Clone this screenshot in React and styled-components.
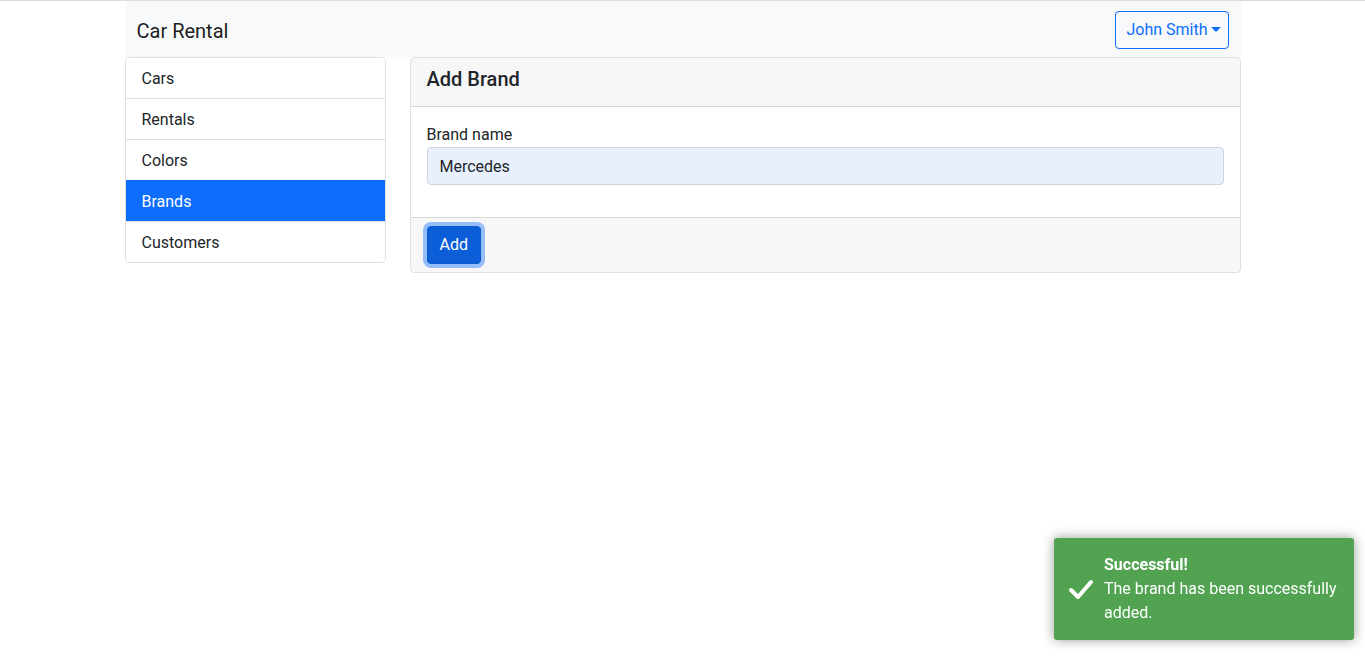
import React from 'react';
import styled, { createGlobalStyle } from 'styled-components';

const GlobalStyle = createGlobalStyle`
  *, *::before, *::after { box-sizing: border-box; }
  body {
    margin: 0;
    font-family: Roboto, "Noto Sans", "Liberation Sans", sans-serif;
    font-size: 16px;
    line-height: 1.5;
    color: #212529;
    background: #fff;
  }
`;

const Page = styled.div`
  border-top: 1px solid #dcdcdc;
  min-height: 656px;
`;

const Container = styled.div`
  max-width: 1140px;
  margin: 0 auto;
  padding: 0 12px;
`;

const Navbar = styled.nav`
  display: flex;
  align-items: center;
  justify-content: space-between;
  height: 56px;
  padding: 8px 12px;
  background: #f8f9fa;
`;

const Brand = styled.span`
  font-size: 20px;
  line-height: 30px;
  padding-top: 3px;
  color: rgba(0, 0, 0, 0.9);
`;

const UserButton = styled.button`
  display: flex;
  align-items: center;
  height: 38px;
  margin-top: 1px;
  padding: 6px 7px 6px 10px;
  font: inherit;
  color: #0d6efd;
  background: transparent;
  border: 1px solid #0d6efd;
  border-radius: 4px;

  &::after {
    content: '';
    margin-left: 3px;
    border-top: 5px solid currentColor;
    border-left: 5px solid transparent;
    border-right: 5px solid transparent;
  }
`;

const Row = styled.div`
  display: grid;
  grid-template-columns: 261px 1fr;
  gap: 24px;
`;

const ListGroup = styled.div`
  display: flex;
  flex-direction: column;
  align-self: start;
  border: 1px solid rgba(0, 0, 0, 0.125);
  border-radius: 4px;
  overflow: hidden;
`;

const ListItem = styled.div`
  padding: 9px 16px 7px;
  height: ${({ first }) => (first ? '40px' : '41px')};
  color: ${({ active }) => (active ? '#fff' : '#212529')};
  background: ${({ active }) => (active ? '#0d6efd' : '#fff')};
  border-top: ${({ first }) => (first ? 'none' : '1px solid rgba(0,0,0,0.125)')};
  border-color: ${({ active }) => (active ? '#0d6efd' : 'rgba(0,0,0,0.125)')};
  line-height: 24px;
`;

const Card = styled.div`
  align-self: start;
  border: 1px solid rgba(0, 0, 0, 0.125);
  border-radius: 4px;
  overflow: hidden;
`;

const CardHeader = styled.div`
  padding: 9px 16px 15px;
  background: rgba(0, 0, 0, 0.03);
  border-bottom: 1px solid rgba(0, 0, 0, 0.125);
`;

const CardTitle = styled.h5`
  margin: 0;
  font-size: 20px;
  font-weight: 500;
  line-height: 24px;
`;

const CardBody = styled.div`
  padding: 16px;
`;

const Field = styled.div`
  margin-bottom: 16px;
`;

const Label = styled.label`
  display: block;
  margin: 0;
  line-height: 24px;
`;

const Input = styled.input`
  display: block;
  width: 100%;
  height: 38px;
  padding: 6px 12px;
  font: inherit;
  color: #212529;
  background: #e8f0fe;
  border: 1px solid #ced4da;
  border-radius: 4px;
  outline: none;
`;

const CardFooter = styled.div`
  padding: 8px 16px;
  background: rgba(0, 0, 0, 0.03);
  border-top: 1px solid rgba(0, 0, 0, 0.125);
`;

const PrimaryButton = styled.button`
  display: block;
  height: 38px;
  padding: 6px 12px;
  font: inherit;
  color: #fff;
  background: #0b5ed7;
  border: 1px solid #0a58ca;
  border-radius: 4px;
  box-shadow: 0 0 0 4px rgba(49, 132, 253, 0.5);
`;

const Toast = styled.div`
  position: fixed;
  right: 11px;
  bottom: 17px;
  width: 300px;
  display: flex;
  align-items: center;
  padding: 15px 15px 15px 50px;
  background: #51a351;
  color: #fff;
  border-radius: 3px;
  box-shadow: 0 0 12px #999;
`;

const ToastIcon = styled.svg`
  position: absolute;
  left: 14px;
  top: 50%;
  transform: translateY(-50%);
`;

const ToastText = styled.div`
  line-height: 24px;
`;

const ToastTitle = styled.div`
  font-weight: 700;
`;

const menu = ['Cars', 'Rentals', 'Colors', 'Brands', 'Customers'];

export default function App() {
  return (
    <>
      <GlobalStyle />
      <Page>
        <Container>
          <Navbar>
            <Brand>Car Rental</Brand>
            <UserButton>John Smith</UserButton>
          </Navbar>
          <Row>
            <ListGroup>
              {menu.map((m, i) => (
                <ListItem key={m} first={i === 0} active={m === 'Brands'}>
                  {m}
                </ListItem>
              ))}
            </ListGroup>
            <Card>
              <CardHeader>
                <CardTitle>Add Brand</CardTitle>
              </CardHeader>
              <CardBody>
                <Field>
                  <Label>Brand name</Label>
                  <Input defaultValue="Mercedes" />
                </Field>
              </CardBody>
              <CardFooter>
                <PrimaryButton>Add</PrimaryButton>
              </CardFooter>
            </Card>
          </Row>
        </Container>
        <Toast>
          <ToastIcon width="26" height="22" viewBox="0 0 26 22">
            <path d="M3 12 L10 19 L23 4" fill="none" stroke="#fff" strokeWidth="4" strokeLinecap="round" strokeLinejoin="round" />
          </ToastIcon>
          <ToastText>
            <ToastTitle>Successful!</ToastTitle>
            <div>The brand has been successfully added.</div>
          </ToastText>
        </Toast>
      </Page>
    </>
  );
}
